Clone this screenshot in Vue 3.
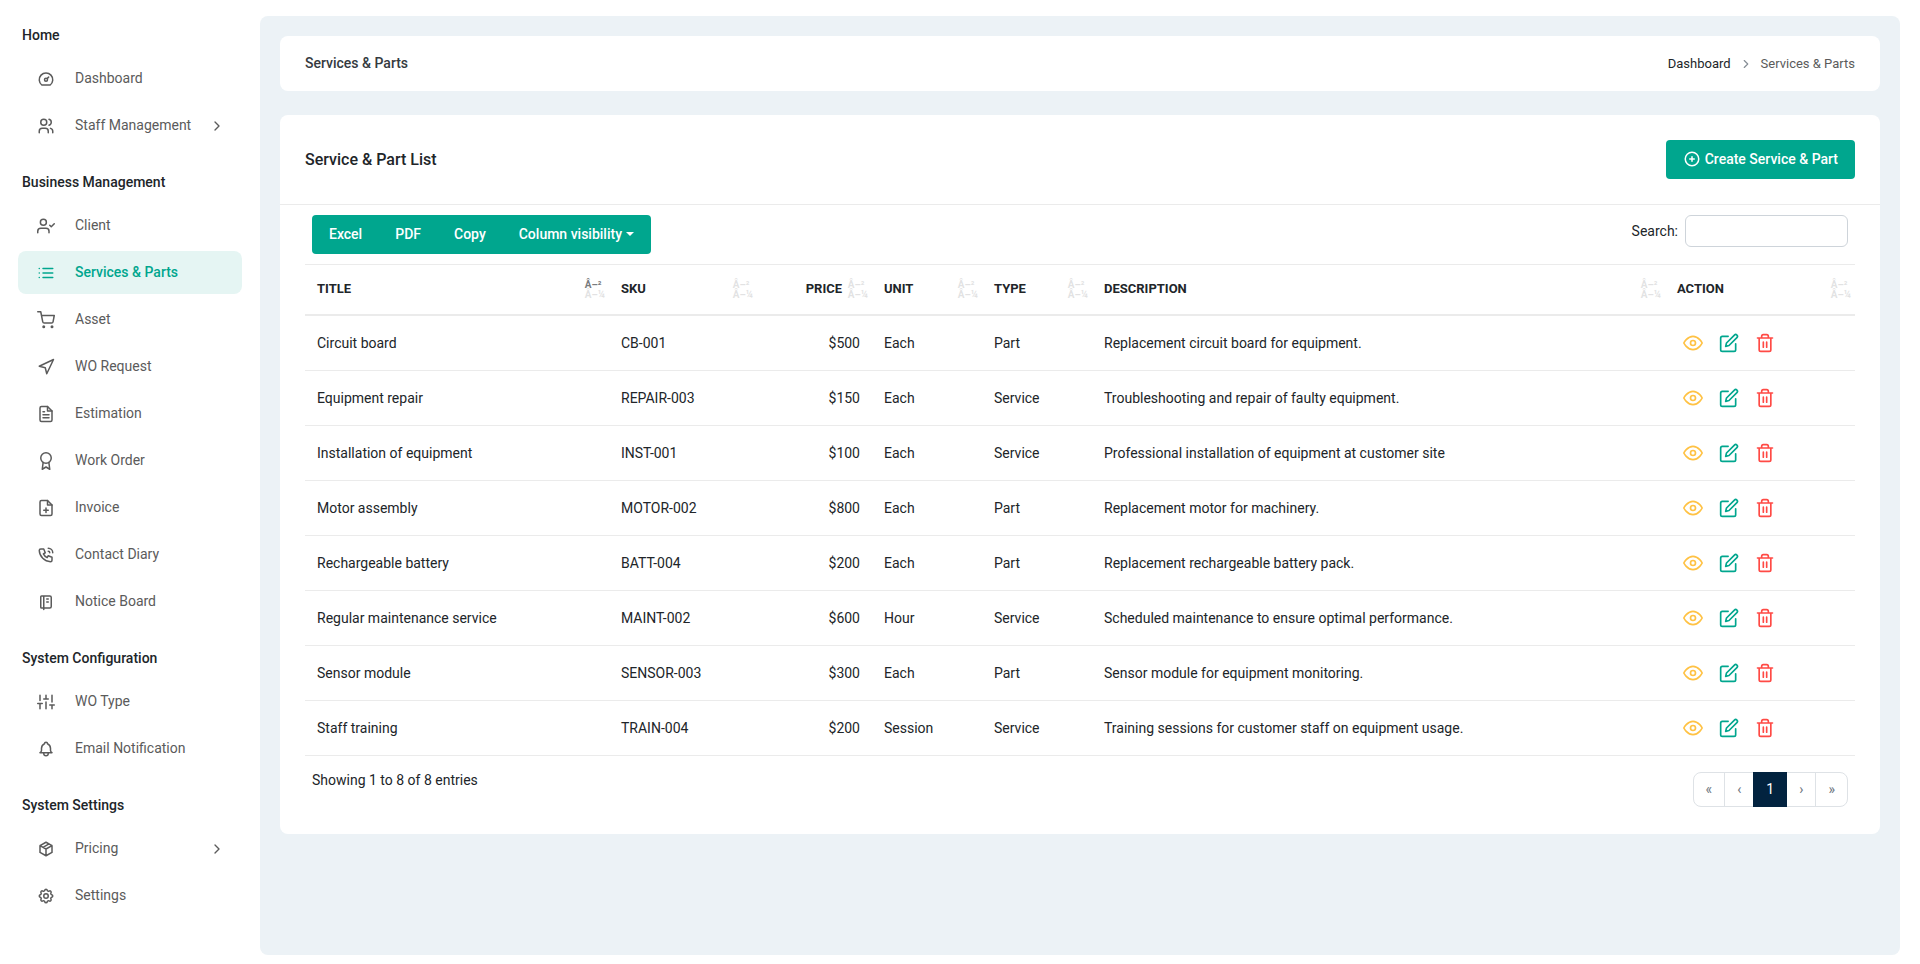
<script setup>
import { ref } from 'vue'

const icons = {
  dashboard: '<path d="M10 13a2 2 0 1 0 4 0a2 2 0 1 0-4 0M13.45 11.55L15.5 9.5M6.4 20a9 9 0 1 1 11.2 0z"/>',
  users: '<path d="M5 7a4 4 0 1 0 8 0a4 4 0 1 0-8 0M3 21v-2a4 4 0 0 1 4-4h4a4 4 0 0 1 4 4v2M16 3.13a4 4 0 0 1 0 7.75M21 21v-2a4 4 0 0 0-3-3.85"/>',
  userCheck: '<path d="M16 21v-2a4 4 0 0 0-4-4H5a4 4 0 0 0-4 4v2"/><circle cx="8.500" cy="7" r="4"/><path d="M17 11l2 2 4-4"/>',
  list: '<path d="M8 6h13M8 12h13M8 18h13M3 6h.01M3 12h.01M3 18h.01"/>',
  cart: '<circle cx="9" cy="21" r="1"/><circle cx="20" cy="21" r="1"/><path d="M1 1h4l2.680 13.390a2 2 0 0 0 2 1.610h9.720a2 2 0 0 0 2-1.610L23 6H6"/>',
  navigation: '<path d="M3 11L22 2L13 21L11 13L3 11z"/>',
  fileText: '<path d="M14 2H6a2 2 0 0 0-2 2v16a2 2 0 0 0 2 2h12a2 2 0 0 0 2-2V8z"/><path d="M14 2v6h6M16 13H8M16 17H8M10 9H8"/>',
  award: '<circle cx="12" cy="8" r="7"/><path d="M8.210 13.890L7 23l5-3 5 3-1.210-9.120"/>',
  filePlus: '<path d="M14 2H6a2 2 0 0 0-2 2v16a2 2 0 0 0 2 2h12a2 2 0 0 0 2-2V8z"/><path d="M14 2v6h6M12 18v-6M9 15h6"/>',
  phone: '<path d="M5 4h4l2 5l-2.500 1.500a11 11 0 0 0 5 5l1.500-2.500l5 2v4a2 2 0 0 1-2 2a16 16 0 0 1-15-15a2 2 0 0 1 2-2M15 7a2 2 0 0 1 2 2M15 3a6 6 0 0 1 6 6"/>',
  notebook: '<path d="M6 4h11a2 2 0 0 1 2 2v12a2 2 0 0 1-2 2H6a1 1 0 0 1-1-1V5a1 1 0 0 1 1-1M9 4v18M13 8h2M13 12h2"/>',
  sliders: '<path d="M4 21v-7M4 10V3M12 21v-9M12 8V3M20 21v-5M20 12V3M1 14h6M9 8h6M17 16h6"/>',
  bell: '<path d="M10 5a2 2 0 0 1 4 0a7 7 0 0 1 4 6v3a4 4 0 0 0 2 3H4a4 4 0 0 0 2-3v-3a7 7 0 0 1 4-6M9 17v1a3 3 0 0 0 6 0v-1"/>',
  package: '<path d="M12 3l8 4.500v9l-8 4.500l-8-4.500v-9L12 3M12 12l8-4.500M12 12v9M12 12L4 7.500M16 5.250l-8 4.500"/>',
  settings: '<path d="M10.325 4.317c.426-1.756 2.924-1.756 3.350 0a1.724 1.724 0 0 0 2.573 1.066c1.543-.94 3.310.826 2.370 2.370a1.724 1.724 0 0 0 1.065 2.572c1.756.426 1.756 2.924 0 3.350a1.724 1.724 0 0 0-1.066 2.573c.94 1.543-.826 3.310-2.370 2.370a1.724 1.724 0 0 0-2.572 1.065c-.426 1.756-2.924 1.756-3.350 0a1.724 1.724 0 0 0-2.573-1.066c-1.543.94-3.310-.826-2.370-2.370a1.724 1.724 0 0 0-1.065-2.572c-1.756-.426-1.756-2.924 0-3.350a1.724 1.724 0 0 0 1.066-2.573c-.94-1.543.826-3.310 2.370-2.370c1 .608 2.296.070 2.572-1.065z"/><circle cx="12" cy="12" r="3"/>',
}

const groups = [
  { title: 'Home', items: [
    { label: 'Dashboard', icon: 'dashboard' },
    { label: 'Staff Management', icon: 'users', more: true },
  ] },
  { title: 'Business Management', items: [
    { label: 'Client', icon: 'userCheck' },
    { label: 'Services & Parts', icon: 'list', active: true },
    { label: 'Asset', icon: 'cart' },
    { label: 'WO Request', icon: 'navigation' },
    { label: 'Estimation', icon: 'fileText' },
    { label: 'Work Order', icon: 'award' },
    { label: 'Invoice', icon: 'filePlus' },
    { label: 'Contact Diary', icon: 'phone' },
    { label: 'Notice Board', icon: 'notebook' },
  ] },
  { title: 'System Configuration', items: [
    { label: 'WO Type', icon: 'sliders' },
    { label: 'Email Notification', icon: 'bell' },
  ] },
  { title: 'System Settings', items: [
    { label: 'Pricing', icon: 'package', more: true },
    { label: 'Settings', icon: 'settings' },
  ] },
]

const columns = [
  { key: 'title', label: 'Title' },
  { key: 'sku', label: 'SKU' },
  { key: 'price', label: 'Price' },
  { key: 'unit', label: 'Unit' },
  { key: 'type', label: 'Type' },
  { key: 'description', label: 'Description' },
  { key: 'action', label: 'Action' },
]

const rows = [
  ['Circuit board', 'CB-001', '$500', 'Each', 'Part', 'Replacement circuit board for equipment.'],
  ['Equipment repair', 'REPAIR-003', '$150', 'Each', 'Service', 'Troubleshooting and repair of faulty equipment.'],
  ['Installation of equipment', 'INST-001', '$100', 'Each', 'Service', 'Professional installation of equipment at customer site'],
  ['Motor assembly', 'MOTOR-002', '$800', 'Each', 'Part', 'Replacement motor for machinery.'],
  ['Rechargeable battery', 'BATT-004', '$200', 'Each', 'Part', 'Replacement rechargeable battery pack.'],
  ['Regular maintenance service', 'MAINT-002', '$600', 'Hour', 'Service', 'Scheduled maintenance to ensure optimal performance.'],
  ['Sensor module', 'SENSOR-003', '$300', 'Each', 'Part', 'Sensor module for equipment monitoring.'],
  ['Staff training', 'TRAIN-004', '$200', 'Session', 'Service', 'Training sessions for customer staff on equipment usage.'],
]

const pages = ['«', '‹', '1', '›', '»']
const search = ref('')
</script>

<template>
  <div class="layout">
    <aside class="sidebar">
      <nav>
        <section v-for="group in groups" :key="group.title" class="group">
          <h2 class="group-title">{{ group.title }}</h2>
          <a v-for="item in group.items" :key="item.label" href="#" class="nav-link" :class="{ active: item.active }">
            <svg class="nav-icon" viewBox="0 0 24 24" v-html="icons[item.icon]"></svg>
            <span class="nav-label">{{ item.label }}</span>
            <svg v-if="item.more" class="nav-more" viewBox="0 0 24 24"><path d="M9 18l6-6-6-6" /></svg>
          </a>
        </section>
      </nav>
    </aside>

    <main class="content">
      <header class="card page-head">
        <h1 class="page-title">Services &amp; Parts</h1>
        <nav class="crumbs">
          <a href="#">Dashboard</a>
          <svg class="crumb-sep" viewBox="0 0 24 24"><path d="M9 18l6-6-6-6" /></svg>
          <span>Services &amp; Parts</span>
        </nav>
      </header>

      <section class="card">
        <header class="card-head">
          <h2 class="card-title">Service &amp; Part List</h2>
          <button type="button" class="create">
            <svg viewBox="0 0 24 24"><circle cx="12" cy="12" r="9" /><path d="M12 9v6M9 12h6" /></svg>
            <span>Create Service &amp; Part</span>
          </button>
        </header>

        <div class="card-body">
          <div class="toolbar">
            <div class="exports">
              <button type="button">Excel</button>
              <button type="button">PDF</button>
              <button type="button">Copy</button>
              <button type="button">Column visibility<i class="caret"></i></button>
            </div>
            <label class="search">Search: <input v-model="search" type="search" /></label>
          </div>

          <table>
            <colgroup>
              <col v-for="col in columns" :key="col.key" :class="'col-' + col.key" />
            </colgroup>
            <thead>
              <tr>
                <th v-for="(col, i) in columns" :key="col.key" :class="{ num: col.key === 'price', sorted: i === 0 }">
                  {{ col.label }}
                  <span class="sort"><span class="asc">â–²</span><span class="desc">â–¼</span></span>
                </th>
              </tr>
            </thead>
            <tbody>
              <tr v-for="row in rows" :key="row[1]">
                <td v-for="(cell, i) in row" :key="i" :class="{ num: i === 2 }">{{ cell }}</td>
                <td>
                  <div class="actions">
                    <a href="#" class="view" aria-label="View">
                      <svg viewBox="0 0 24 24"><path d="M1 12s4-8 11-8 11 8 11 8-4 8-11 8-11-8-11-8z" /><circle cx="12" cy="12" r="3" /></svg>
                    </a>
                    <a href="#" class="edit" aria-label="Edit">
                      <svg viewBox="0 0 24 24"><path d="M11 4H4a2 2 0 0 0-2 2v14a2 2 0 0 0 2 2h14a2 2 0 0 0 2-2v-7" /><path d="M18.500 2.500a2.121 2.121 0 0 1 3 3L12 15l-4 1 1-4 9.500-9.500z" /></svg>
                    </a>
                    <a href="#" class="remove" aria-label="Delete">
                      <svg viewBox="0 0 24 24"><path d="M3 6h18M19 6v14a2 2 0 0 1-2 2H7a2 2 0 0 1-2-2V6m3 0V4a2 2 0 0 1 2-2h4a2 2 0 0 1 2 2v2M10 11v6M14 11v6" /></svg>
                    </a>
                  </div>
                </td>
              </tr>
            </tbody>
          </table>

          <footer class="table-foot">
            <p>Showing 1 to 8 of 8 entries</p>
            <nav class="pager">
              <a v-for="page in pages" :key="page" href="#" :class="{ current: page === '1' }">{{ page }}</a>
            </nav>
          </footer>
        </div>
      </section>
    </main>
  </div>
</template>

<style>
body {
  margin: 0;
  background: #fff;
}
</style>

<style scoped>
* {
  box-sizing: border-box;
}
.layout {
  display: flex;
  min-height: 100vh;
  padding: 16px 20px 9px 0;
  font: 14px/22px Roboto, "Liberation Sans", sans-serif;
  color: #212529;
}
h1, h2, p {
  margin: 0;
}
a {
  color: inherit;
  text-decoration: none;
}
button {
  font: inherit;
  color: inherit;
  border: 0;
  cursor: pointer;
}
svg {
  flex: none;
  fill: none;
  stroke: currentColor;
  stroke-width: 2;
  stroke-linecap: round;
  stroke-linejoin: round;
}
.sidebar {
  flex: none;
  width: 260px;
  padding: 0 18px;
}
.group-title {
  padding: 24px 4px 11px;
  font-size: 14px;
  line-height: 22px;
  font-weight: 500;
}
.group:first-child .group-title {
  padding-top: 8px;
}
.nav-link {
  display: flex;
  align-items: center;
  height: 43px;
  margin-bottom: 4px;
  padding: 0 19px;
  border-radius: 8px;
  color: #5b5b5b;
}
.group .nav-link:last-child {
  margin-bottom: 0;
}
.nav-link.active {
  background: #e5f5f3;
  color: #00a68e;
  font-weight: 500;
}
.nav-icon {
  width: 18px;
  height: 18px;
  margin-right: 20px;
}
.nav-label {
  padding-bottom: 2px;
}
.nav-more {
  width: 16px;
  height: 16px;
  margin-left: auto;
  margin-right: -2px;
}
.content {
  flex: 1;
  min-width: 0;
  padding: 20px;
  border-radius: 8px;
  background: #ecf2f6;
}
.card {
  border-radius: 8px;
  background: #fff;
}
.page-head {
  display: flex;
  align-items: center;
  justify-content: space-between;
  height: 55px;
  margin-bottom: 24px;
  padding: 0 25px;
}
.page-title {
  padding-bottom: 2px;
  font-size: 14px;
  font-weight: 500;
  color: #343a40;
}
.crumbs {
  display: flex;
  align-items: center;
  font-size: 13px;
  color: #5b5b5b;
}
.crumbs a {
  color: #212529;
}
.crumb-sep {
  width: 14px;
  height: 14px;
  margin: 0 8px;
  color: #868e96;
}
.card-head {
  display: flex;
  align-items: center;
  justify-content: space-between;
  height: 90px;
  padding: 0 25px;
  border-bottom: 1px solid #ebebeb;
}
.card-title {
  font-size: 16px;
  font-weight: 500;
}
.create {
  display: flex;
  align-items: center;
  gap: 4px;
  height: 39px;
  padding: 0 17px 2px;
  border-radius: 4px;
  background: #00a68e;
  color: #fff;
  font-weight: 500;
}
.create svg {
  width: 18px;
  height: 18px;
}
.card-body {
  padding: 10px 25px 27px;
}
.toolbar {
  display: flex;
  justify-content: space-between;
  align-items: flex-start;
  padding: 0 7px 10px;
}
.exports {
  display: flex;
  height: 39px;
  border-radius: 4px;
  background: #00a68e;
  color: #fff;
}
.exports button {
  display: flex;
  align-items: center;
  padding: 0 17px 2px;
  background: none;
  font-weight: 500;
}
.exports button + button {
  margin-left: -1px;
}
.caret {
  margin-left: 4px;
  border: 4px solid transparent;
  border-top-color: currentColor;
  border-bottom: 0;
}
.search {
  display: flex;
  align-items: center;
  gap: 7px;
}
.search input {
  width: 163px;
  height: 32px;
  padding: 4px 8px;
  border: 1px solid #ced4da;
  border-radius: 6px;
  background: #fff;
  font: inherit;
}
table {
  width: 100%;
  table-layout: fixed;
  border-collapse: separate;
  border-spacing: 0;
}
.col-title { width: 304px; }
.col-sku { width: 148px; }
.col-price { width: 115px; }
.col-unit, .col-type { width: 110px; }
.col-action { width: 190px; }
th {
  position: relative;
  height: 52px;
  padding: 0 30px 2px 12px;
  border-top: 1px solid #ebebeb;
  border-bottom: 2px solid #ebebeb;
  font-size: 13px;
  font-weight: 700;
  text-align: left;
  text-transform: uppercase;
}
td {
  height: 55px;
  padding: 0 12px;
  border-bottom: 1px solid #ebebeb;
}
.num {
  text-align: right;
}
.sort {
  position: absolute;
  top: 15px;
  right: 4px;
  display: grid;
  font-size: 10px;
  line-height: 10px;
  text-align: left;
}
.asc, .desc {
  opacity: 0.125;
}
.sorted .asc {
  opacity: 0.6;
}
.actions {
  display: flex;
  gap: 16px;
  padding-left: 6px;
}
.actions svg {
  display: block;
  width: 20px;
  height: 20px;
}
.view { color: #ffc244; }
.edit { color: #00a68e; }
.remove { color: #ff4a45; }
.table-foot {
  display: flex;
  justify-content: space-between;
  align-items: flex-start;
  padding: 13px 7px 0;
}
.pager {
  display: flex;
  height: 35px;
  margin-top: 3px;
}
.pager a {
  margin-left: -1px;
  padding: 5px 12px;
  border: 1px solid #dee2e6;
  color: #6c757d;
}
.pager a:first-child {
  border-radius: 8px 0 0 8px;
}
.pager a:last-child {
  border-radius: 0 8px 8px 0;
}
.pager .current {
  position: relative;
  z-index: 1;
  border-color: #02233f;
  background: #02233f;
  color: #fff;
}
</style>
